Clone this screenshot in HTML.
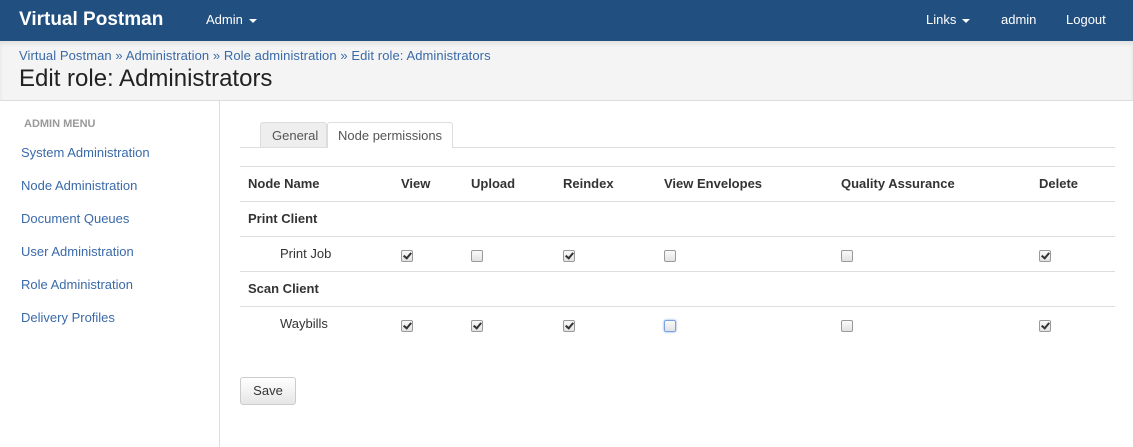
<!DOCTYPE html>
<html><head><meta charset="utf-8"><style>
*{box-sizing:border-box;margin:0;padding:0}
body{width:1133px;height:447px;overflow:hidden;background:#fff;font-family:"Liberation Sans",Arial,sans-serif;font-size:13px;color:#333;position:relative}
.a{position:absolute;white-space:nowrap}
.nav{position:absolute;left:0;top:0;width:1133px;height:41px;background:#204f80}
.nav .a{color:#fff;font-size:13px;top:12px}
.caret{display:inline-block;width:0;height:0;border-left:4px solid transparent;border-right:4px solid transparent;border-top:4px solid #fff;vertical-align:middle;margin-left:6px}
.hdr{position:absolute;left:0;top:41px;width:1133px;height:60px;background:#f4f4f4;border-bottom:1px solid #ddd;box-shadow:inset 0 3px 4px rgba(0,0,0,.08)}
.side{position:absolute;left:219px;top:101px;width:1px;height:346px;background:#ddd}
.lk{color:#3a6aa8}
.hl{position:absolute;left:240px;width:875px;height:1px;background:#ddd}
.th{font-weight:bold;top:176px}
.cb{position:absolute;width:12px;height:12px;border:1px solid #9a9a9a;border-radius:2px;background:linear-gradient(#fafafa,#e2e2e2)}
.cb.c::after{content:"";position:absolute;left:3px;top:0px;width:3px;height:6px;border:solid #333;border-width:0 2px 2px 0;transform:rotate(40deg)}
.cb.f{border-color:#7ba2e0;box-shadow:0 0 2px #7ba2e0}
</style></head><body>
<div class="nav">
<div class="a" style="left:19px;top:9px;font-size:19px;font-weight:bold">Virtual Postman</div>
<div class="a" style="left:206px">Admin<span class="caret"></span></div>
<div class="a" style="left:926px">Links<span class="caret"></span></div>
<div class="a" style="left:1001px">admin</div>
<div class="a" style="left:1066px">Logout</div>
</div>
<div class="hdr">
<div class="a lk" style="left:19px;top:7px;font-size:13px;letter-spacing:0.08px">Virtual Postman » Administration » Role administration » Edit role: Administrators</div>
<div class="a" style="left:19px;top:24px;font-size:24px;color:#222">Edit role: Administrators</div>
</div>
<div class="side"></div>
<div class="a" style="left:24px;top:118px;font-size:11px;font-weight:bold;color:#999">ADMIN MENU</div>
<div class="a lk" style="left:21px;top:145px">System Administration</div>
<div class="a lk" style="left:21px;top:178px">Node Administration</div>
<div class="a lk" style="left:21px;top:211px">Document Queues</div>
<div class="a lk" style="left:21px;top:244px">User Administration</div>
<div class="a lk" style="left:21px;top:277px">Role Administration</div>
<div class="a lk" style="left:21px;top:310px">Delivery Profiles</div>

<div class="a" style="left:260px;top:122px;width:67px;height:26px;background:#eee;border:1px solid #ddd;border-bottom:none;border-radius:3px 3px 0 0;padding:5px 0 0 11px;color:#555">General</div>
<div class="hl" style="top:147px"></div>
<div class="a" style="left:327px;top:122px;width:126px;height:26px;background:#fff;border:1px solid #ddd;border-bottom:none;border-radius:3px 3px 0 0;padding:5px 0 0 10px;color:#555">Node permissions</div>

<div class="hl" style="top:166px"></div>
<div class="a th" style="left:248px">Node Name</div>
<div class="a th" style="left:401px">View</div>
<div class="a th" style="left:471px">Upload</div>
<div class="a th" style="left:563px">Reindex</div>
<div class="a th" style="left:664px">View Envelopes</div>
<div class="a th" style="left:841px">Quality Assurance</div>
<div class="a th" style="left:1039px">Delete</div>
<div class="hl" style="top:201px"></div>
<div class="a" style="left:248px;top:211px;font-weight:bold">Print Client</div>
<div class="hl" style="top:236px"></div>
<div class="a" style="left:280px;top:246px">Print Job</div>
<div class="cb c" style="left:401px;top:250px"></div>
<div class="cb" style="left:471px;top:250px"></div>
<div class="cb c" style="left:563px;top:250px"></div>
<div class="cb" style="left:664px;top:250px"></div>
<div class="cb" style="left:841px;top:250px"></div>
<div class="cb c" style="left:1039px;top:250px"></div>
<div class="hl" style="top:271px"></div>
<div class="a" style="left:248px;top:281px;font-weight:bold">Scan Client</div>
<div class="hl" style="top:306px"></div>
<div class="a" style="left:280px;top:316px">Waybills</div>
<div class="cb c" style="left:401px;top:320px"></div>
<div class="cb c" style="left:471px;top:320px"></div>
<div class="cb c" style="left:563px;top:320px"></div>
<div class="cb f" style="left:664px;top:320px"></div>
<div class="cb" style="left:841px;top:320px"></div>
<div class="cb c" style="left:1039px;top:320px"></div>

<div class="a" style="left:240px;top:377px;width:56px;height:28px;border:1px solid #ccc;border-radius:3px;background:linear-gradient(#fff,#e6e6e6);text-align:center;line-height:26px;color:#333">Save</div>
</body></html>
